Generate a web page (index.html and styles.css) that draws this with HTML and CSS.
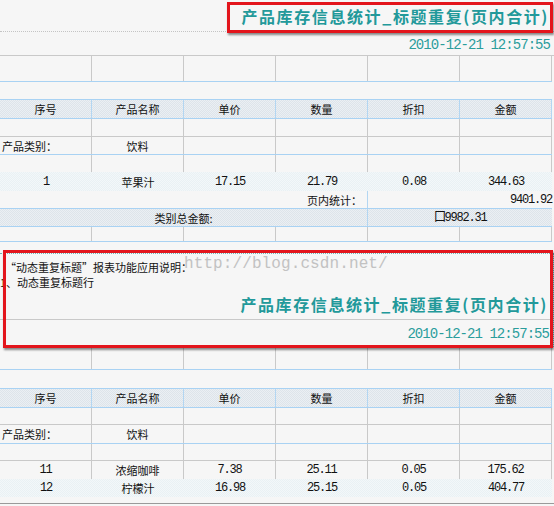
FILE: index.html
```html
<!DOCTYPE html>
<html lang="zh-CN">
<head>
<meta charset="utf-8">
<title>产品库存信息统计</title>
<link rel="stylesheet" href="styles.css">
</head>
<body>
<div class="page">
  <div class="title-row line-dot"><span class="title">产品库存信息统计_标题重复(页内合计)</span></div>
  <div class="date-row line-gray"><span class="date">2010-12-21 12:57:55</span></div>
  <div class="grid gray-cols line-blue h26"><i></i><i></i><i></i><i></i><i></i><i></i></div>
  <div class="band line-blue h18"></div>
  <div class="grid head line-blue h19"><i>序号</i><i>产品名称</i><i>单价</i><i>数量</i><i>折扣</i><i>金额</i></div>
  <div class="grid gray-cols line-gray h18"><i></i><i></i><i></i><i></i><i></i><i></i></div>
  <div class="grid gray-cols line-blue h18"><i class="left">产品类别：</i><i>饮料</i><i></i><i></i><i></i><i></i></div>
  <div class="grid gray-cols h17"><i></i><i></i><i></i><i></i><i></i><i></i></div>
  <div class="grid data-alt h19"><i class="num">1</i><i>苹果汁</i><i class="num">17.15</i><i class="num">21.79</i><i class="num">0.08</i><i class="num">344.63</i></div>
  <div class="grid total line-blue h18"><i class="span4 right">页内统计：</i><i class="span2 right num">9401.92</i></div>
  <div class="grid total head line-blue h18"><i class="span4">类别总金额:</i><i class="span2 num">囗9982.31</i></div>
  <div class="grid gray-cols line-blue h15"><i></i><i></i><i></i><i></i><i></i><i></i></div>
  <div class="gap"></div>
  <div class="note">
    <div class="note-text">
      <p>“动态重复标题”报表功能应用说明：</p>
      <p>1、动态重复标题行</p>
    </div>
    <div class="title-row2 line-gray"><span class="title">产品库存信息统计_标题重复(页内合计)</span></div>
    <div class="date-row2"><span class="date">2010-12-21 12:57:55</span></div>
  </div>
  <div class="grid gray-cols line-blue h23"><i></i><i></i><i></i><i></i><i></i><i></i></div>
  <div class="band line-blue h19"></div>
  <div class="grid head line-blue h19"><i>序号</i><i>产品名称</i><i>单价</i><i>数量</i><i>折扣</i><i>金额</i></div>
  <div class="grid gray-cols line-gray h17"><i></i><i></i><i></i><i></i><i></i><i></i></div>
  <div class="grid gray-cols line-blue h19"><i class="left">产品类别：</i><i>饮料</i><i></i><i></i><i></i><i></i></div>
  <div class="grid gray-cols line-gray h17"><i></i><i></i><i></i><i></i><i></i><i></i></div>
  <div class="grid gray-cols h18"><i class="num">11</i><i>浓缩咖啡</i><i class="num">7.38</i><i class="num">25.11</i><i class="num">0.05</i><i class="num">175.62</i></div>
  <div class="grid data-alt h18"><i class="num">12</i><i>柠檬汁</i><i class="num">16.98</i><i class="num">25.15</i><i class="num">0.05</i><i class="num">404.77</i></div>
  <div class="end"></div>

  <div class="mark mark1"></div>
  <div class="mark mark2"></div>
  <div class="watermark">http://blog.csdn.net/</div>
</div>
</body>
</html>
```
FILE: styles.css
```css
* { box-sizing: border-box; }
html, body { margin: 0; padding: 0; }
body {
  background: #f6f6f6;
  font-family: "Noto Sans CJK SC", "Liberation Sans", sans-serif;
  font-size: 11px;
  color: #111;
}
.page { position: relative; width: 554px; height: 506px; overflow: hidden; }

.line-dot { border-bottom: 1px dotted #c4c4c4; }
.line-gray { border-bottom: 1px solid #c9c9c9; }
.line-blue { border-bottom: 1px solid #a9d2f3; }

.h15 { height: 15px; } .h17 { height: 17px; } .h18 { height: 18px; }
.h19 { height: 19px; } .h23 { height: 23px; } .h26 { height: 26px; }

.title-row {
  height: 32px;
  display: flex; justify-content: flex-end; align-items: center;
  padding: 1px 5px 0 0;
}
.title {
  font-weight: bold; font-size: 16px; letter-spacing: 1.6px;
  color: #22999a; line-height: 20px;
}
.date-row {
  height: 24px;
  display: flex; justify-content: flex-end; align-items: center;
  padding: 2px 4px 0 0;
}
.date {
  font-family: "Liberation Mono", "DejaVu Sans Mono", monospace;
  font-size: 14px; letter-spacing: -0.95px; color: #2a9d9c; line-height: 16px;
}

.grid {
  display: grid;
  grid-template-columns: repeat(6, 92px);
  width: 552px;
}
.grid i {
  font-style: normal;
  display: flex; align-items: center; justify-content: center;
  line-height: 14px; white-space: nowrap;
}
.gray-cols i { border-right: 1px solid #c9c9c9; }
.head {
  background-color: #e4e9ee;
  background-image: repeating-conic-gradient(#dde4ea 0 25%, #ebeff3 0 50%);
  background-size: 2px 2px;
}
.head i { border-right: 1px solid #b3d6f2; }
.data-alt {
  background-color: #eef4f6;
  background-image: repeating-conic-gradient(#e9f1f4 0 25%, #f3f7f9 0 50%);
  background-size: 2px 2px;
}
.total i.span4 { grid-column: span 4; border-right: 1px solid #b3d6f2; }
.total i.span2 { grid-column: span 2; border-right: none; }
.grid i.left { justify-content: flex-start; padding-left: 2px; }
.grid i.right { justify-content: flex-end; padding-right: 5px; }
.grid i.span2.right { padding-right: 0; }
.num {
  font-family: "Liberation Mono", "DejaVu Sans Mono", monospace;
  font-size: 12px; letter-spacing: -1.2px;
}
.band { width: 552px; }
.gap { height: 11px; }

.note { border-top: 1px dotted #6fb5b5; border-right: 1px dotted #6fb5b5; width: 554px; }
.note-text { padding: 6px 0 0 0; }
.note-text p { margin: 0; line-height: 15px; }
.note-text p:first-child { padding-left: 5px; }
.title-row2 {
  height: 30px;
  display: flex; justify-content: flex-end; align-items: center;
  padding: 0 5px 1px 0;
}
.date-row2 {
  height: 27px;
  display: flex; justify-content: flex-end; align-items: center;
  padding: 0 4px 0 0;
}
.end { height: 7px; border-bottom: 1px solid #9a9a9a; }

.mark {
  position: absolute;
  border: 3px solid #e3151c;
  box-shadow: 1px 2px 2px rgba(0, 0, 0, 0.45);
}
.mark1 { left: 227px; top: 2px; width: 326px; height: 31px; }
.mark2 { left: 3px; top: 250px; width: 550px; height: 98px; }
.watermark {
  position: absolute; left: 184px; top: 255px;
  font-family: "Liberation Mono", "Courier New", monospace;
  font-size: 16px; line-height: 18px; color: #c2c2c2;
  letter-spacing: 0.1px;
}
```
